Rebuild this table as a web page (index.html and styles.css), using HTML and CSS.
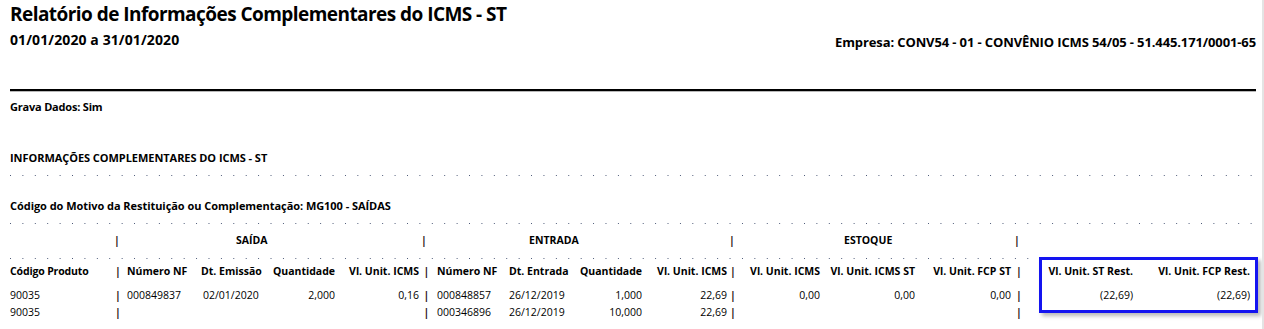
FILE: index.html
```html
<!DOCTYPE html>
<html lang="pt-BR">
<head>
<meta charset="utf-8">
<title>Relatório de Informações Complementares do ICMS - ST</title>
<link rel="stylesheet" href="styles.css">
</head>
<body>
<div class="page">
  <header class="report-head">
    <h1 class="title">Relatório de Informações Complementares do ICMS - ST</h1>
    <div class="subhead">
      <span class="period">01/01/2020 a 31/01/2020</span>
      <span class="company">Empresa: CONV54 - 01 - CONVÊNIO ICMS 54/05 - 51.445.171/0001-65</span>
    </div>
  </header>
  <div class="rule"></div>
  <p class="param">Grava Dados: Sim</p>
  <h2 class="section">INFORMAÇÕES COMPLEMENTARES DO ICMS - ST</h2>
  <div class="dots"></div>
  <h3 class="motivo">Código do Motivo da Restituição ou Complementação: MG100 - SAÍDAS</h3>
  <div class="dots dots-b"></div>

  <div class="grid">
    <!-- group row -->
    <div class="g cell"></div>
    <div class="g pipe gp-1">|</div>
    <div class="g grp grp-saida">SAÍDA</div>
    <div class="g pipe gp-4">|</div>
    <div class="g grp grp-entrada">ENTRADA</div>
    <div class="g pipe gp-2">|</div>
    <div class="g grp grp-estoque">ESTOQUE</div>
    <div class="g pipe gp-2">|</div>
    <div class="g grp-rest"></div>

    <div class="dotrow"><div class="dots dots-in"></div></div>

    <!-- header row -->
    <div class="h cell first">Código Produto</div>
    <div class="h pipe">|</div>
    <div class="h cell">Número NF</div>
    <div class="h cell">Dt. Emissão</div>
    <div class="h cell num">Quantidade</div>
    <div class="h cell num">Vl. Unit. ICMS</div>
    <div class="h pipe">|</div>
    <div class="h cell">Número NF</div>
    <div class="h cell pl">Dt. Entrada</div>
    <div class="h cell num">Quantidade</div>
    <div class="h cell num">Vl. Unit. ICMS</div>
    <div class="h pipe">|</div>
    <div class="h cell num">Vl. Unit. ICMS</div>
    <div class="h cell num">Vl. Unit. ICMS ST</div>
    <div class="h cell num">Vl. Unit. FCP ST</div>
    <div class="h pipe">|</div>
    <div class="h cell num">Vl. Unit. ST Rest.</div>
    <div class="h cell num">Vl. Unit. FCP Rest.</div>

    <!-- row 1 -->
    <div class="d cell first">90035</div>
    <div class="d pipe">|</div>
    <div class="d cell">000849837</div>
    <div class="d cell pl">02/01/2020</div>
    <div class="d cell num">2,000</div>
    <div class="d cell num">0,16</div>
    <div class="d pipe">|</div>
    <div class="d cell">000848857</div>
    <div class="d cell pl">26/12/2019</div>
    <div class="d cell num">1,000</div>
    <div class="d cell num">22,69</div>
    <div class="d pipe">|</div>
    <div class="d cell num">0,00</div>
    <div class="d cell num">0,00</div>
    <div class="d cell num">0,00</div>
    <div class="d pipe">|</div>
    <div class="d cell num">(22,69)</div>
    <div class="d cell num">(22,69)</div>

    <!-- row 2 -->
    <div class="d cell first">90035</div>
    <div class="d pipe">|</div>
    <div class="d cell"></div>
    <div class="d cell"></div>
    <div class="d cell"></div>
    <div class="d cell"></div>
    <div class="d pipe">|</div>
    <div class="d cell">000346896</div>
    <div class="d cell pl">26/12/2019</div>
    <div class="d cell num">10,000</div>
    <div class="d cell num">22,69</div>
    <div class="d pipe">|</div>
    <div class="d cell"></div>
    <div class="d cell"></div>
    <div class="d cell"></div>
    <div class="d pipe">|</div>
    <div class="d cell"></div>
    <div class="d cell"></div>

    <div class="highlight"></div>
  </div>
</div>
</body>
</html>
```

FILE: styles.css
```css
* { box-sizing: border-box; }

html, body {
  margin: 0;
  padding: 0;
  background: #fff;
}

body {
  font-family: "Open Sans", "Noto Sans", sans-serif;
  color: #000;
  border-right: 2px solid #e4e4e4;
  min-height: 329px;
}

.page {
  padding: 2px 6px 0 10px;
}

.title {
  margin: 0;
  font-size: 19px;
  line-height: 24px;
  font-weight: 700;
  letter-spacing: -0.55px;
}

.subhead {
  display: flex;
  justify-content: space-between;
  align-items: flex-end;
  margin-top: 5px;
}

.period {
  font-size: 14px;
  line-height: 18px;
  font-weight: 700;
  letter-spacing: 0.1px;
}

.company {
  font-size: 13px;
  line-height: 16px;
  font-weight: 700;
  letter-spacing: -0.12px;
  position: relative;
  top: 1px;
}

.rule {
  margin-top: 40px;
  height: 2px;
  background: #000;
  box-shadow: 0 1px 0 #b8b8b8;
}

.param,
.section,
.motivo {
  margin: 0;
  font-size: 11px;
  line-height: 14px;
  font-weight: 700;
}

.param { margin-top: 9px; letter-spacing: -0.2px; }
.section { margin-top: 37px; letter-spacing: -0.05px; }
.motivo { margin-top: 23px; letter-spacing: -0.05px; }

.dots {
  height: 1px;
  width: 1243px;
  background-image: linear-gradient(to right, #4b5876 0 1.4px, transparent 1.4px);
  background-size: 12.42px 1px;
  background-repeat: repeat-x;
}

.section + .dots { margin-top: 10px; }
.motivo + .dots { margin-top: 10px; }

.grid {
  position: relative;
  margin-top: 6px;
  display: grid;
  grid-template-columns:
    104px 8px 74px 70px 71px 84px
    11px 70px 70px 72px 85px
    8px 85px 95px 96px
    12px 110px 117px;
  font-size: 10.5px;
}

.cell,
.pipe {
  white-space: nowrap;
}

.pipe {
  text-align: center;
  font-weight: 700;
  color: #2a1414;
}

.g {
  line-height: 20px;
  font-weight: 700;
}

.gp-1 { padding-right: 2px; }
.gp-2 { padding-right: 4px; }
.gp-4 { padding-right: 8px; }

.grp { grid-column: span 4; }
.grp-saida { padding-left: 114px; }
.grp-entrada { padding-left: 97px; }
.grp-estoque {
  grid-column: span 3;
  padding-left: 107px;
}
.grp-rest { grid-column: span 2; }

.dotrow {
  grid-column: 1 / -1;
  height: 14px;
  padding-top: 8px;
}

.h {
  font-weight: 700;
  line-height: 14px;
  padding-bottom: 9px;
}

.h.first { letter-spacing: -0.15px; }

.d {
  line-height: 17px;
}

.cell { padding: 0 2px 0 5px; }
.num { text-align: right; padding: 0 2px 0 0; }
.first { padding-left: 0; }
.pl { padding-left: 7px; }

.highlight {
  position: absolute;
  left: 1029px;
  top: 27px;
  width: 219px;
  height: 56px;
  border: 3px solid #1414f0;
  box-shadow: 3px 3px 4px rgba(0, 0, 0, 0.28);
  pointer-events: none;
}
```
